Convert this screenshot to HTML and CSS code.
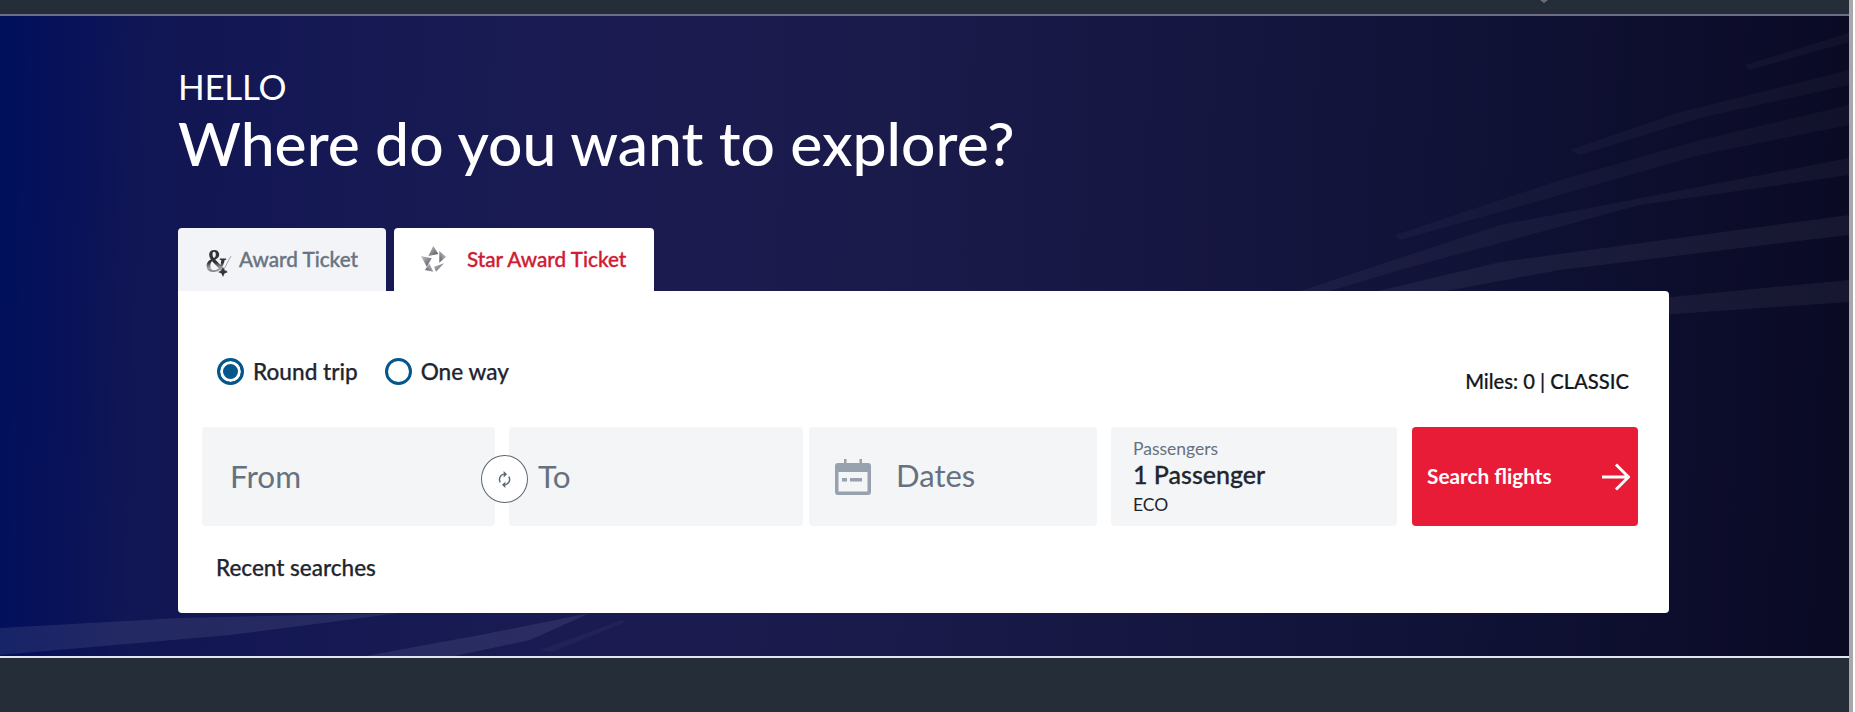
FILE: index.html
```html
<!DOCTYPE html>
<html lang="en">
<head>
<meta charset="utf-8">
<title>Where do you want to explore?</title>
<link rel="stylesheet" href="styles.css">
</head>
<body>
<div class="page">
  <div class="topbar"><span class="caret"></span></div>
  <main class="hero">
    <svg class="streaks" viewBox="0 16 1849 642" preserveAspectRatio="none" aria-hidden="true">
      <polygon class="s1" points="1640,300 1849,280 1849,302 1660,315"/>
      <polygon class="s1" points="1378,291 1500,262 1849,215 1849,235 1560,270 1440,292"/>
      <polygon class="s2" points="1300,291 1500,225 1849,158 1849,175 1640,205 1400,270 1330,291"/>
      <polygon class="s3" points="1395,235 1560,180 1700,140 1849,105 1849,125 1700,155 1560,195 1400,240"/>
      <polygon class="s3" points="1570,150 1680,112 1849,70 1849,85 1700,118 1580,155"/>
      <polygon class="s3" points="1745,65 1849,33 1849,42 1750,70"/>
      <polygon class="s4" points="0,628 180,618 400,613 230,635 0,655"/>
      <polygon class="s4" points="360,657 480,635 590,613 530,640 450,657"/>
      <polygon class="s3" points="540,650 622,620 626,622 552,652"/>
    </svg>
    <div class="greeting">
      <p class="hello">HELLO</p>
      <h1 class="title">Where do you want to explore?</h1>
    </div>
    <div class="tabs">
      <div class="tab tab-award">
        <span class="amp">&amp;</span>
        <svg class="amp-star" viewBox="0 0 14 22">
          <path d="M5 16 13 1" stroke="#a4a7ab" stroke-width="1" fill="none"/>
          <polygon points="5,12 6.500,15.500 10,17 6.500,18.500 5,22 3.500,18.500 0,17 3.500,15.500" fill="#33373d"/>
        </svg>
        <span>Award Ticket</span>
      </div>
      <div class="tab tab-star">
        <svg class="star-logo" viewBox="0 0 25 26">
          <defs>
            <linearGradient id="g1" x1="0" y1="0" x2="1" y2="1"><stop offset="0" stop-color="#c8c9cc"/><stop offset="1" stop-color="#4c4e54"/></linearGradient>
            <linearGradient id="g2" x1="1" y1="0" x2="0" y2="1"><stop offset="0" stop-color="#d2d3d6"/><stop offset="1" stop-color="#56595f"/></linearGradient>
          </defs>
          <polygon points="12.300,0 7.300,10 17.300,8" fill="url(#g1)"/>
          <polygon points="18.300,5 25,10.700 18.300,16.700" fill="url(#g2)"/>
          <polygon points="23,17.300 15,25.700 13,20.700" fill="url(#g1)"/>
          <polygon points="8.300,17.300 12.300,25.700 4,24" fill="url(#g2)"/>
          <polygon points="0,10 10.700,12.300 5.700,20.700" fill="url(#g1)"/>
        </svg>
        <span>Star Award Ticket</span>
      </div>
    </div>
    <section class="card">
      <div class="options">
        <div class="radios">
          <label class="radio"><span class="dot dot-on"></span>Round trip</label>
          <label class="radio"><span class="dot"></span>One way</label>
        </div>
        <div class="miles">Miles: 0 | CLASSIC</div>
      </div>
      <div class="fields">
        <div class="field field-from"><span class="placeholder">From</span></div>
        <button class="swap" type="button" aria-label="Swap">
          <svg viewBox="0 0 20 24" fill="none" stroke="#5d6772" stroke-width="1.700">
            <path d="M5 15.500A6.500 6.500 0 0 1 9 5.700"/>
            <path d="M15 8.500A6.500 6.500 0 0 1 11 18.300"/>
            <polygon points="9,2 9,9.500 13,5.700" fill="#5d6772" stroke="none"/>
            <polygon points="11,14.500 11,22 7,18.300" fill="#5d6772" stroke="none"/>
          </svg>
        </button>
        <div class="field field-to"><span class="placeholder">To</span></div>
        <div class="field field-dates">
          <svg class="cal" viewBox="0 0 36 36">
            <path fill="#98a1ae" d="M9 0h2.500v4h13V0H27v4h6a3 3 0 0 1 3 3v26a3 3 0 0 1-3 3H3a3 3 0 0 1-3-3V7a3 3 0 0 1 3-3h6z"/>
            <rect x="3.500" y="13" width="29" height="19.500" fill="#f4f5f7"/>
            <rect x="7" y="19" width="5" height="3.500" fill="#98a1ae"/>
            <rect x="15" y="19" width="12" height="3.500" fill="#98a1ae"/>
          </svg>
          <span class="placeholder placeholder-dates">Dates</span>
        </div>
        <div class="field field-pax">
          <span class="pax-label">Passengers</span>
          <span class="pax-value">1 Passenger</span>
          <span class="pax-class">ECO</span>
        </div>
        <button class="search" type="button">
          <span class="search-label">Search flights</span>
          <svg class="arrow" viewBox="0 0 28 28" fill="none" stroke="#fff" stroke-width="3"><path d="M0 14h26M14 1.500 26.500 14 14 26.500"/></svg>
        </button>
      </div>
      <div class="recent">Recent searches</div>
    </section>
  </main>
  <div class="footer"></div>
</div>
<div class="scrollbar"></div>
</body>
</html>
```

FILE: styles.css
```css
* { box-sizing: border-box; }
html, body { height: 100%; }
body {
  margin: 0;
  display: flex;
  height: 712px;
  overflow: hidden;
  background: #fff;
  font-family: "Lato", "Liberation Sans", sans-serif;
  color: #1f2630;
}
.page { width: 1849px; display: flex; flex-direction: column; }
.scrollbar { width: 6px; background: linear-gradient(90deg, #a8a8a8 0 4px, #fff 4px); }
.topbar {
  position: relative;
  height: 16px;
  background: #252d38;
  border-bottom: 2px solid #6f6d85;
}
.caret {
  position: absolute;
  left: 1540px;
  top: 0;
  border-left: 4px solid transparent;
  border-right: 4px solid transparent;
  border-top: 3px solid #6a7078;
}
.hero {
  position: relative;
  height: 642px;
  padding: 55px 0 0 178px;
  background: linear-gradient(92deg, #00105c 0, #06115a 3%, #111654 8%, #1a1b52 30%, #1a1a4a 50%, #14153e 68%, #0f1134 82%, #0a0a24 100%);
  border-bottom: 2px solid #e4e4ee;
  overflow: hidden;
}
.streaks { position: absolute; left: 0; top: 0; width: 1849px; height: 642px; }
.s1, .s2, .s3 { fill: #fff; }
.s1 { opacity: .05; }
.s2 { opacity: .04; }
.s3 { opacity: .03; }
.s4 { fill: #7a7ea8; opacity: .18; }
.greeting, .tabs, .card { position: relative; }
.greeting { color: #fff; }
.hello { margin: 0; font-size: 35px; line-height: 30px; font-weight: 400; letter-spacing: -.3px; }
.title { margin: 6px 0 0; font-size: 60.600px; line-height: 72px; font-weight: 500; }
.tabs { display: flex; gap: 8px; margin-top: 49px; height: 63px; }
.tab {
  display: flex;
  align-items: center;
  height: 63px;
  padding-bottom: 2px;
  border-radius: 4px 4px 0 0;
  font-size: 20.700px;
  font-weight: 500;
  -webkit-text-stroke: .35px currentColor;
}
.tab-award { position: relative; width: 208px; padding-left: 61px; background: #f3f4f8; color: #6a7380; }
.amp {
  position: absolute;
  left: 27px;
  top: 17px;
  font-family: "Liberation Serif", serif;
  font-size: 34px;
  line-height: 32px;
  font-weight: 700;
  -webkit-text-stroke: 0;
  transform: scaleX(.82);
  transform-origin: left center;
  background: linear-gradient(#2f3237 55%, #a2a4a8 72%, #4a4d52 100%);
  -webkit-background-clip: text;
  background-clip: text;
  color: transparent;
}
.amp-star { position: absolute; left: 40px; top: 27px; width: 14px; height: 22px; }
.tab-star { width: 260px; padding-left: 27px; gap: 21px; background: #fff; color: #d01c33; }
.star-logo { width: 25px; height: 26px; }
.card {
  width: 1491px;
  height: 322px;
  padding: 0 31px 0 24px;
  background: #fff;
  border-radius: 0 4px 4px 4px;
}
.options { display: flex; justify-content: space-between; padding: 67px 0 0 15px; height: 136px; }
.radios { display: flex; gap: 27px; height: 27px; }
.radio { display: flex; align-items: center; gap: 9px; padding-top: 0; font-size: 22.600px; line-height: 29px; font-weight: 500; color: #1f2630; -webkit-text-stroke: .25px currentColor; }
.dot {
  width: 27px;
  height: 27px;
  border: 3px solid #04578b;
  border-radius: 50%;
  background: #fff;
}
.dot-on { background: #04578b; box-shadow: inset 0 0 0 3px #fff; }
.miles { margin: 11px 9px 0 0; font-size: 20.200px; line-height: 24px; height: 24px; color: #14181e; font-weight: 500; -webkit-text-stroke: .2px currentColor; }
.fields { position: relative; display: flex; height: 99px; }
.field { height: 99px; background: #f4f5f7; border-radius: 4px; display: flex; align-items: center; }
.placeholder { font-size: 31.500px; line-height: 38px; margin-top: -2px; color: #667180; }
.placeholder-dates { font-size: 31px; margin-top: -4px; margin-left: -1px; }
.field-from { width: 293px; padding-left: 28px; margin-right: 14px; }
.field-to { width: 294px; padding-left: 29px; margin-right: 6px; }
.field-dates { width: 288px; padding-left: 26px; margin-right: 14px; gap: 26px; }
.cal { width: 36px; height: 36px; }
.field-pax { width: 286px; padding-left: 22px; margin-right: 15px; flex-direction: column; align-items: flex-start; }
.pax-label { margin-top: 12px; font-size: 17.500px; line-height: 20px; color: #667180; }
.pax-value { margin-top: 1px; font-size: 25px; line-height: 28px; color: #1f2630; font-weight: 500; -webkit-text-stroke: .3px currentColor; }
.pax-class { margin-top: 7px; font-size: 17.500px; line-height: 20px; color: #1f2630; }
.swap {
  position: absolute;
  left: 279px;
  top: 28px;
  width: 47px;
  height: 48px;
  padding: 0;
  display: flex;
  align-items: center;
  justify-content: center;
  background: #fff;
  border: 1.500px solid #5d6772;
  border-radius: 50%;
}
.swap svg { width: 17px; height: 21px; }
.search {
  width: 226px;
  height: 99px;
  padding: 0 8px 0 15px;
  display: flex;
  align-items: center;
  justify-content: space-between;
  border: 0;
  border-radius: 4px;
  background: #e91c37;
  color: #fff;
  font-family: inherit;
  font-size: 20.800px;
  font-weight: 700;
}
.search-label { margin-top: -2px; }
.arrow { width: 28px; height: 28px; }
.recent { margin: 30px 0 0 14px; font-size: 22.500px; line-height: 24px; font-weight: 500; color: #1f2630; -webkit-text-stroke: .25px currentColor; }
.footer { flex: 1; background: #252d38; }
```
